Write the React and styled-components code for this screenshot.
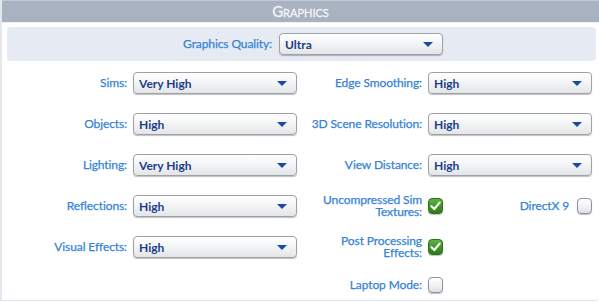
import React from 'react';
import styled, { createGlobalStyle } from 'styled-components';

const GlobalStyle = createGlobalStyle`
  html, body {
    margin: 0;
    padding: 0;
    background: #ffffff;
  }
  body {
    font-family: Lato, "Open Sans", "Liberation Sans", sans-serif;
  }
`;

const Panel = styled.div`
  width: 599px;
  height: 301px;
  box-sizing: border-box;
  border-left: 2px solid #e4e8ee;
  border-bottom: 1px solid #dfe2e7;
  border-bottom-right-radius: 4px;
  background: #ffffff;
`;

const Header = styled.div`
  height: 23px;
  box-sizing: border-box;
  border-top: 1px solid #c4cad4;
  border-bottom: 1px solid #eef0f3;
  background: #a8b2c1;
  color: #f3f5f8;
  font-size: 15px;
  font-variant: small-caps;
  -webkit-text-stroke: 0.3px #f3f5f8;
  display: flex;
  align-items: center;
  justify-content: center;
  line-height: 1;
`;

const Body = styled.div`
  padding: 4px 3px 0 5px;
`;

const QualityBox = styled.div`
  height: 34px;
  border-radius: 4px;
  background: #e6ebf3;
  display: flex;
  align-items: center;
  justify-content: flex-end;
  gap: 7px;
  padding-right: 153px;
`;

const Grid = styled.div`
  display: grid;
  grid-template-columns: 119px 164px 119px 164px;
  grid-template-rows: repeat(5, 22px) 16px;
  column-gap: 6px;
  row-gap: 19px;
  margin: 11px 0 0 1px;
  align-items: center;
`;

const Label = styled.div`
  color: #3583d8;
  font-size: 12px;
  line-height: 12px;
  text-align: right;
  -webkit-text-stroke: 0.25px #3583d8;
  letter-spacing: -0.1px;
  grid-column: ${(p) => p.col || 'auto'};
`;

const Select = styled.div`
  position: relative;
  width: ${(p) => p.width || 164}px;
  height: 22px;
  box-sizing: border-box;
  border: 1px solid #9da2a9;
  border-radius: 4px;
  background: linear-gradient(#ffffff 0%, #f4f5f6 45%, #e3e5e8 100%);
  box-shadow: 0 1px 1px rgba(0, 0, 0, 0.25);
  color: #1c3d8c;
  font-weight: 700;
  font-size: 12px;
  display: flex;
  align-items: center;
  padding-left: 5px;
`;

const Arrow = styled.span`
  position: absolute;
  right: 9px;
  top: 8px;
  width: 0;
  height: 0;
  border-left: 5.5px solid transparent;
  border-right: 5.5px solid transparent;
  border-top: 5px solid #1b4aa0;
`;

const CheckCell = styled.div`
  display: flex;
  align-items: center;
  justify-content: space-between;
`;

const Inline = styled.div`
  display: flex;
  align-items: center;
  gap: 8px;
`;

const Box = styled.span`
  width: 15px;
  height: 16px;
  box-sizing: border-box;
  border-radius: 4px;
  display: inline-flex;
  align-items: center;
  justify-content: center;
  border: 1px solid ${(p) => (p.checked ? '#2f6e1f' : '#8e9399')};
  background: ${(p) =>
    p.checked
      ? 'linear-gradient(#5fb441 0%, #3f9127 55%, #2d7a1c 100%)'
      : 'linear-gradient(#ffffff 0%, #eef0f2 60%, #dcdfe3 100%)'};
  box-shadow: 0 1px 1px rgba(0, 0, 0, 0.25);
`;

const Checkbox = ({ checked }) => (
  <Box checked={checked}>
    {checked && (
      <svg width="11" height="10" viewBox="0 0 11 10">
        <path d="M1.5 5.2 L4.3 8 L9.6 1.6" fill="none" stroke="#ffffff" strokeWidth="2.2" strokeLinecap="round" strokeLinejoin="round" />
      </svg>
    )}
  </Box>
);

const Dropdown = ({ value, width }) => (
  <Select width={width}>
    {value}
    <Arrow />
  </Select>
);

export default function App() {
  return (
    <>
      <GlobalStyle />
      <Panel>
        <Header>Graphics</Header>
        <Body>
          <QualityBox>
            <Label>Graphics Quality:</Label>
            <Dropdown value="Ultra" />
          </QualityBox>
          <Grid>
            <Label>Sims:</Label>
            <Dropdown value="Very High" />
            <Label>Edge Smoothing:</Label>
            <Dropdown value="High" />

            <Label>Objects:</Label>
            <Dropdown value="High" />
            <Label>3D Scene Resolution:</Label>
            <Dropdown value="High" />

            <Label>Lighting:</Label>
            <Dropdown value="Very High" />
            <Label>View Distance:</Label>
            <Dropdown value="High" />

            <Label>Reflections:</Label>
            <Dropdown value="High" />
            <Label>Uncompressed Sim<br />Textures:</Label>
            <CheckCell>
              <Checkbox checked />
              <Inline>
                <Label>DirectX 9</Label>
                <Checkbox />
              </Inline>
            </CheckCell>

            <Label>Visual Effects:</Label>
            <Dropdown value="High" />
            <Label>Post Processing<br />Effects:</Label>
            <CheckCell>
              <Checkbox checked />
            </CheckCell>

            <Label col="3">Laptop Mode:</Label>
            <CheckCell>
              <Checkbox />
            </CheckCell>
          </Grid>
        </Body>
      </Panel>
    </>
  );
}
